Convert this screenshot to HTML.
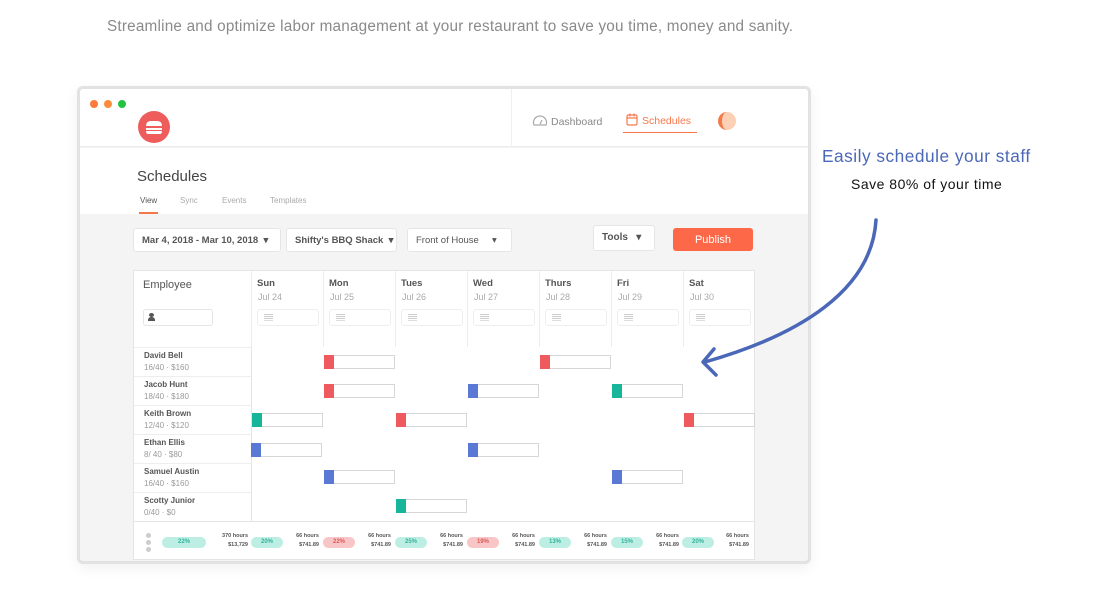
<!DOCTYPE html>
<html><head><meta charset="utf-8"><style>
*{margin:0;padding:0;box-sizing:border-box}
body{width:1102px;height:608px;background:#fff;font-family:"Liberation Sans",sans-serif;position:relative;overflow:hidden}
.a{position:absolute}
.tag{font-size:15.3px;color:#8a8a8a;left:107px;top:18px;letter-spacing:0.2px;white-space:nowrap}
.win{left:77px;top:86px;width:734px;height:478px;border:3px solid #e2e2e2;border-radius:6px;background:#f4f4f4;overflow:hidden;box-shadow:0 4px 14px rgba(0,0,0,0.06)}
.dot{width:8px;height:8px;border-radius:50%;top:11px}
.sel{background:#fff;border:1px solid #e6e6e6;border-radius:3px;height:24px;top:228px;font-size:9.5px;font-weight:bold;color:#555;padding:6px 8px;white-space:nowrap}
.tbl{left:133px;top:270px;width:622px;height:290px;background:#fff;border:1px solid #e4e4e4}
.day{top:0;width:72px;height:76px;border-left:1px solid #ececec}
.day b{display:block;font-size:9.5px;color:#555;margin:7px 0 0 5px}
.day i{display:block;font-style:normal;font-size:9px;color:#aaa;margin:3px 0 0 6px}
.nb{position:absolute;left:5px;top:38px;width:62px;height:17px;border:1px solid #eee;border-radius:3px}
.nb::before{content:"";position:absolute;left:6px;top:4px;width:9px;height:1px;background:#ccc;box-shadow:0 2px 0 #ccc,0 4px 0 #ccc,0 6px 0 #ddd}
.emp{left:0;width:118px;height:29px;border-top:1px solid #eee;border-right:1px solid #e4e4e4;padding:3px 0 0 10px}
.emp b{display:block;font-size:8px;color:#555}
.emp i{display:block;font-style:normal;font-size:8px;color:#999;margin-top:3px}
.sh{height:14px;width:71px;border:1px solid #d6d6d6;background:#fff}
.sh::before{content:"";position:absolute;left:-1px;top:-1px;width:10px;height:14px;background:var(--c)}
.pill{top:15px;height:11px;width:44px;border-radius:6px;font-size:6px;font-weight:bold;text-align:center;line-height:11px}
.g{background:#bdeee4;color:#2fb39b}.r{background:#f8c6c6;color:#e05757}
.st{top:10px;font-size:5.5px;color:#555;text-align:right;line-height:9px;font-weight:bold}
</style></head><body>
<div class="a tag">Streamline and optimize labor management at your restaurant to save you time, money and sanity.</div>

<div class="a win">
  <div class="a" style="left:0;top:0;width:728px;height:58px;background:#fff;border-bottom:1px solid #ececec"></div>
  <div class="a dot" style="left:10px;background:#fb7a3c"></div>
  <div class="a dot" style="left:24px;background:#fb8c3c"></div>
  <div class="a dot" style="left:38px;background:#22c23d"></div>
  <div class="a" style="left:58px;top:22px;width:32px;height:32px;border-radius:50%;background:#ee5c5c"></div>
  <div class="a" style="left:66px;top:32px;width:16px;height:5px;border-radius:8px 8px 1px 1px;background:#fff"></div>
  <div class="a" style="left:66px;top:39px;width:16px;height:2px;background:#fff"></div>
  <div class="a" style="left:66px;top:42px;width:16px;height:3px;border-radius:1px 1px 3px 3px;background:#fff"></div>
  <div class="a" style="left:431px;top:0;width:1px;height:58px;background:#f0f0f0"></div>
  <svg class="a" style="left:452px;top:25px" width="16" height="13" viewBox="0 0 16 13"><path d="M2 11 A6.5 6.5 0 1 1 14 11 Z" fill="none" stroke="#aaa" stroke-width="1.2"/><path d="M8 10 L10 6" stroke="#aaa" stroke-width="1.2"/></svg>
  <div class="a" style="left:471px;top:27px;font-size:10.5px;color:#888">Dashboard</div>
  <svg class="a" style="left:546px;top:24px" width="12" height="13" viewBox="0 0 12 13"><rect x="1" y="2" width="10" height="10" rx="1.5" fill="none" stroke="#f7774a" stroke-width="1.2"/><path d="M1 5h10M4 0.5v3M8 0.5v3" stroke="#f7774a" stroke-width="1.2"/></svg>
  <div class="a" style="left:562px;top:26px;font-size:10.5px;color:#f7774a">Schedules</div>
  <div class="a" style="left:543px;top:43px;width:74px;height:1px;background:#f7774a"></div>
  <div class="a" style="left:638px;top:23px;width:18px;height:18px;border-radius:50%;background:#fbd0b5;border-left:4px solid #f47a4a"></div>

  <div class="a" style="left:0;top:59px;width:728px;height:66px;background:#fff"></div>
  <div class="a" style="left:57px;top:79px;font-size:15px;color:#444">Schedules</div>
  <div class="a" style="left:60px;top:107px;font-size:8px;color:#555">View</div>
  <div class="a" style="left:100px;top:107px;font-size:8px;color:#aaa">Sync</div>
  <div class="a" style="left:142px;top:107px;font-size:8px;color:#aaa">Events</div>
  <div class="a" style="left:190px;top:107px;font-size:8px;color:#aaa">Templates</div>
  <div class="a" style="left:59px;top:123px;width:19px;height:2px;background:#f7774a"></div>
</div>

<div class="a sel" style="left:133px;width:148px">Mar 4, 2018 - Mar 10, 2018 &nbsp;▾</div>
<div class="a sel" style="left:286px;width:111px">Shifty's BBQ Shack &nbsp;▾</div>
<div class="a sel" style="left:407px;width:105px;font-weight:normal;color:#555">Front of House &nbsp; &nbsp; ▾</div>
<div class="a sel" style="left:593px;top:225px;width:62px;height:26px;font-size:10px">Tools &nbsp; ▾</div>
<div class="a" style="left:673px;top:228px;width:80px;height:23px;background:#fd6848;border-radius:3px;color:#fff;font-size:11px;text-align:center;line-height:24px">Publish</div>

<div class="a tbl">
  <div class="a" style="left:9px;top:8px;font-size:11px;color:#555">Employee</div>
  <div class="a" style="left:9px;top:38px;width:70px;height:17px;border:1px solid #e6e6e6;border-radius:3px"></div>
  <div class="a" style="left:15px;top:42px;width:5px;height:4px;border-radius:50%;background:#555"></div>
  <div class="a" style="left:14px;top:46px;width:7px;height:4px;border-radius:3px 3px 0 0;background:#555"></div>
  <div class="a" style="left:117px;top:0;width:505px;height:250px;border-left:1px solid #ececec"></div>
  <div class="a day" style="left:117px"><b>Sun</b><i>Jul 24</i><span class="nb"></span></div>
  <div class="a day" style="left:189px"><b>Mon</b><i>Jul 25</i><span class="nb"></span></div>
  <div class="a day" style="left:261px"><b>Tues</b><i>Jul 26</i><span class="nb"></span></div>
  <div class="a day" style="left:333px"><b>Wed</b><i>Jul 27</i><span class="nb"></span></div>
  <div class="a day" style="left:405px"><b>Thurs</b><i>Jul 28</i><span class="nb"></span></div>
  <div class="a day" style="left:477px"><b>Fri</b><i>Jul 29</i><span class="nb"></span></div>
  <div class="a day" style="left:549px"><b>Sat</b><i>Jul 30</i><span class="nb"></span></div>
  <div class="a emp" style="top:76px"><b>David Bell</b><i>16/40 · $160</i></div>
  <div class="a emp" style="top:105px"><b>Jacob Hunt</b><i>18/40 · $180</i></div>
  <div class="a emp" style="top:134px"><b>Keith Brown</b><i>12/40 · $120</i></div>
  <div class="a emp" style="top:163px"><b>Ethan Ellis</b><i>8/ 40 · $80</i></div>
  <div class="a emp" style="top:192px"><b>Samuel Austin</b><i>16/40 · $160</i></div>
  <div class="a emp" style="top:221px"><b>Scotty Junior</b><i>0/40 · $0</i></div>

  <div class="a sh" style="left:190px;top:84px;--c:#ef5a5f"></div>
  <div class="a sh" style="left:406px;top:84px;--c:#ef5a5f"></div>
  <div class="a sh" style="left:190px;top:113px;--c:#ef5a5f"></div>
  <div class="a sh" style="left:334px;top:113px;--c:#5a79d4"></div>
  <div class="a sh" style="left:478px;top:113px;--c:#17b69b"></div>
  <div class="a sh" style="left:118px;top:142px;--c:#17b69b"></div>
  <div class="a sh" style="left:262px;top:142px;--c:#ef5a5f"></div>
  <div class="a sh" style="left:550px;top:142px;--c:#ef5a5f"></div>
  <div class="a sh" style="left:117px;top:172px;--c:#5a79d4"></div>
  <div class="a sh" style="left:334px;top:172px;--c:#5a79d4"></div>
  <div class="a sh" style="left:190px;top:199px;--c:#5a79d4"></div>
  <div class="a sh" style="left:478px;top:199px;--c:#5a79d4"></div>
  <div class="a sh" style="left:262px;top:228px;--c:#17b69b"></div>

  <div class="a" style="left:0;top:250px;width:620px;height:38px;border-top:1px solid #e4e4e4;background:#fff">
    <div class="a" style="left:12px;top:11px;width:5px;height:5px;border-radius:50%;background:#ccc;box-shadow:0 7px 0 #ccc,0 14px 0 #ccc"></div>
    <div class="a pill g" style="left:28px;width:44px">22%</div>
    <div class="a st" style="left:80px;width:34px">370 hours<br>$13,729</div>
    <div class="a pill g" style="left:117px;width:32px">20%</div>
    <div class="a st" style="left:150px;width:35px">66 hours<br>$741.89</div>
    <div class="a pill r" style="left:189px;width:32px">22%</div>
    <div class="a st" style="left:222px;width:35px">66 hours<br>$741.89</div>
    <div class="a pill g" style="left:261px;width:32px">25%</div>
    <div class="a st" style="left:294px;width:35px">66 hours<br>$741.89</div>
    <div class="a pill r" style="left:333px;width:32px">19%</div>
    <div class="a st" style="left:366px;width:35px">66 hours<br>$741.89</div>
    <div class="a pill g" style="left:405px;width:32px">13%</div>
    <div class="a st" style="left:438px;width:35px">66 hours<br>$741.89</div>
    <div class="a pill g" style="left:477px;width:32px">15%</div>
    <div class="a st" style="left:510px;width:35px">66 hours<br>$741.89</div>
    <div class="a pill g" style="left:548px;width:32px">20%</div>
    <div class="a st" style="left:580px;width:35px">66 hours<br>$741.89</div>
  </div>
</div>

<div class="a" style="left:822px;top:146px;font-size:17.3px;color:#4a67b8;letter-spacing:0.5px;white-space:nowrap">Easily schedule your staff</div>
<div class="a" style="left:851px;top:176px;font-size:14px;color:#111;letter-spacing:0.5px;white-space:nowrap">Save 80% of your time</div>
<svg class="a" style="left:0;top:0" width="1102" height="608"><path d="M876 220 C872 290 800 335 705 362" fill="none" stroke="#4a67b8" stroke-width="3.5" stroke-linecap="round"/><path d="M714 349 L703 362 L716 375" fill="none" stroke="#4a67b8" stroke-width="3.5" stroke-linecap="round" stroke-linejoin="round"/></svg>
</body></html>
